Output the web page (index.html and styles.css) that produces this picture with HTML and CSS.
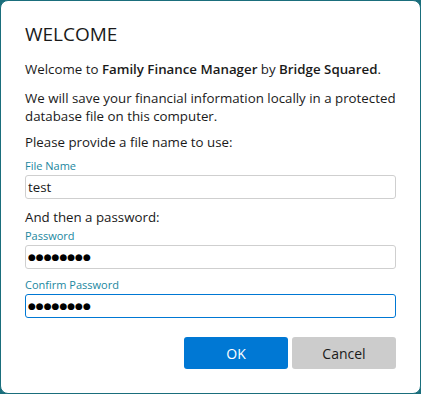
FILE: index.html
```html
<!DOCTYPE html>
<html lang="en">
<head>
    <meta charset="UTF-8">
    <meta name="viewport" content="width=device-width, initial-scale=1.0">
    <title>Welcome</title>
    <link rel="stylesheet" href="styles.css">
</head>
<body>

<div class="dialog">
    <h1>WELCOME</h1>
    <p class="intro">Welcome to <b>Family Finance Manager</b> by <b>Bridge Squared</b>.</p>
    <p>We will save your financial information locally in a protected database file on this computer.</p>
    <p>Please provide a file name to use:</p>

    <!-- File name -->
    <div class="form-group">
        <label for="filename">File Name</label>
        <input type="text" id="filename" value="test">
    </div>

    <p class="tight">And then a password:</p>

    <!-- Passwords -->
    <div class="form-group">
        <label for="password">Password</label>
        <input type="text" id="password" class="secret" value="●●●●●●●●">
    </div>
    <div class="form-group">
        <label for="confirm">Confirm Password</label>
        <input type="text" id="confirm" class="secret focused" value="●●●●●●●●">
    </div>

    <div class="buttons">
        <button class="ok-button">OK</button>
        <button class="cancel-button">Cancel</button>
    </div>
</div>

</body>
</html>
```

FILE: styles.css
```css
body {
    margin: 0;
    background-color: #1a6e7c;
    font-family: "Open Sans", "Noto Sans", sans-serif;
    color: #1a1a1a;
}
.dialog {
    box-sizing: border-box;
    width: 421px;
    height: 394px;
    background-color: #fff;
    border: 1px solid #1a6e7c;
    border-radius: 8px;
    padding: 18px 24px 0 24px;
}
.dialog h1 {
    font-size: 19px;
    font-weight: normal;
    margin: 0 0 11px 0;
    line-height: 30px;
}
.dialog p {
    font-size: 13.3px;
    line-height: 18px;
    margin: 0 -6px 8px 0;
}
.dialog p.intro {
    margin-bottom: 11px;
}
.dialog p.tight {
    margin-bottom: 3px;
}
.dialog b {
    font-weight: 600;
}
.form-group {
    margin-bottom: 9px;
}
.form-group label {
    display: block;
    font-size: 11px;
    color: #1b87a0;
    line-height: 14px;
    margin-bottom: 2px;
}
.form-group input {
    display: block;
    box-sizing: border-box;
    width: 100%;
    height: 24px;
    padding: 0 2px;
    font-family: inherit;
    font-size: 13.3px;
    color: #1a1a1a;
    border: 1px solid #cfcfcf;
    border-radius: 3px;
    outline: none;
}
.form-group input.secret {
    font-family: "DejaVu Sans", sans-serif;
    font-size: 9px;
    color: #000;
}
.form-group input.focused {
    border-color: #0078d4;
}
.buttons {
    display: flex;
    justify-content: flex-end;
    gap: 4px;
    margin-top: 19px;
}
.buttons button {
    width: 104px;
    height: 32px;
    border: none;
    border-radius: 3px;
    font-family: inherit;
    font-size: 14px;
}
.ok-button {
    background-color: #0078d4;
    color: #fff;
}
.cancel-button {
    background-color: #cccccc;
    color: #1a1a1a;
}
```
